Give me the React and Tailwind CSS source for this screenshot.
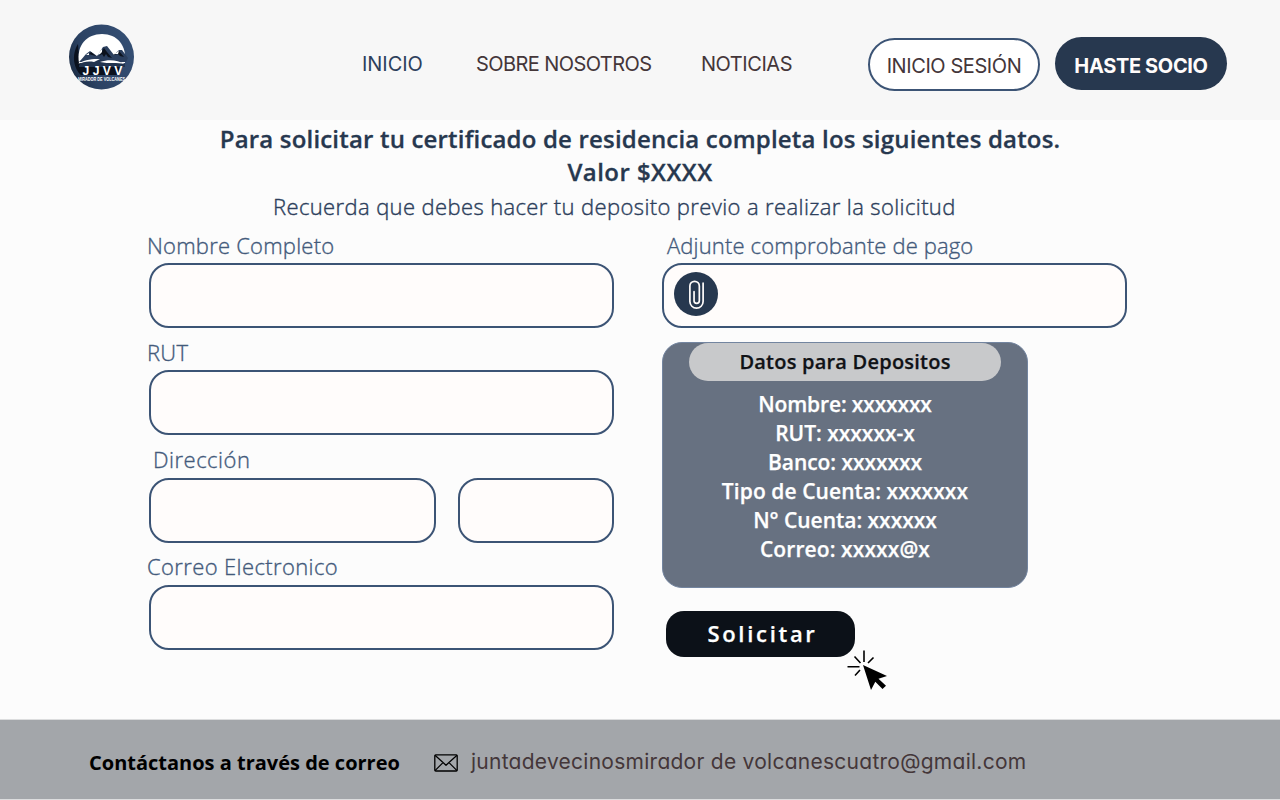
const field = "h-[65px] rounded-[20px] border-2 border-[#3c5475] bg-[#fffcfb] outline-none";
const label =
  "flex h-[35px] items-center whitespace-nowrap pb-px text-[22px] font-light text-[#435a7b] [-webkit-text-stroke:0.35px_#435a7b]";

function Logo() {
  return (
    <svg viewBox="0 0 66 66" className="size-[66px]" role="img">
      <defs>
        <linearGradient id="ring" x1="0" y1="0.7" x2="1" y2="0.3">
          <stop offset="0" stopColor="#1c2c44" />
          <stop offset="0.3" stopColor="#2b4263" />
          <stop offset="1" stopColor="#354f74" />
        </linearGradient>
      </defs>
      <circle cx="33.500" cy="33" r="32.500" fill="url(#ring)" />
      <path d="M10 20C3 31 6 45 13 51l36 0 6-12-44-4z" fill="#0a111e" />
      <path d="M11 39C8 21 19 10 34 10S59 21 57 39z" fill="#fff" />
      <path d="M11 38c3-3 5-6 7-8l4-3 7 5 6-9 4-1 7 9 5-5 3 0 6 8-2 4z" fill="#2b3f5e" />
      <path d="M31 32l5-8 3 4 5 6-4-1-2-3-2 3-2-3zM45 31l6-4 5 6-4-1-2-2zM21 30l2-2 5 4-4-1z" fill="#0c121d" />
      <path d="M29 31l5-6 0 3-2 2zM18 31l3-2 0 2zM46 30l5-3-1 3z" fill="#fff" />
      <path d="M11 41c5-5 11-6 17-6 8 2 18 0 29 5v3H11z" fill="#22344f" />
      <path d="M10 40c8-5 14-5 22-5l-6 3c-6-1-11 0-16 2zM32 38c9-3 17-2 25 2-8-2-16 0-25-2z" fill="#fff" />
      <g fill="#fff" fontFamily="'Liberation Sans', sans-serif" fontWeight="700" textAnchor="middle">
        <text x="34.500" y="51" fontSize="12.500" textLength="40" lengthAdjust="spacingAndGlyphs">J J V V</text>
        <text x="33.500" y="57.200" fontSize="5" textLength="47" lengthAdjust="spacingAndGlyphs">MIRADOR DE VOLCANES</text>
      </g>
    </svg>
  );
}

function Clip() {
  return (
    <span className="flex size-[44px] items-center justify-center rounded-full bg-[#27384f]">
      <svg viewBox="0 0 18 32" className="h-[31px] w-[17px]" fill="none" stroke="#fffcfb" strokeWidth="1.8" strokeLinecap="round">
        <path d="M16 4v19.500a7 7 0 0 1-14 0V7a5 5 0 0 1 10 0v15.500a2.800 2.800 0 0 1-5.600 0V13" />
      </svg>
    </span>
  );
}

function ClickCursor() {
  return (
    <svg viewBox="0 0 42 42" className="absolute left-[181px] top-[38px] size-[42px]">
      <path d="M17 1.500v11.500M7.500 7.500l6 6.500M26.500 8.500l-5.500 5.500M0.500 17.700h12M8 26.500l5-5.500" fill="none" stroke="#000" strokeWidth="1.600" />
      <path d="M16 16l24 11-8.500 2.700 7.500 7-3.500 3.300-7.200-7.300L24 41z" fill="#000" />
    </svg>
  );
}

function Header() {
  return (
    <header className="flex h-[120px] items-start bg-[#f7f7f7] pl-[68px] font-['Inter','Liberation_Sans',sans-serif] text-[20px] text-[#443639]">
      <div className="mt-6 w-[294px]">
        <Logo />
      </div>
      <nav className="mt-[48px] flex whitespace-nowrap leading-8">
        <a className="w-[114px] tracking-[-0.05px] text-[#2d3f5c]">INICIO</a>
        <a className="w-[225px] tracking-[-0.58px]">SOBRE NOSOTROS</a>
        <a className="w-[167px] tracking-[-0.45px]">NOTICIAS</a>
      </nav>
      <button className="mt-[38px] flex h-[53px] w-[172px] items-center justify-center whitespace-nowrap rounded-full border-2 border-[#3c5475] bg-white pt-[2px] tracking-[-0.42px]">
        INICIO SESIÓN
      </button>
      <button className="ml-[15px] mt-[37px] flex h-[53px] w-[172px] items-center justify-center whitespace-nowrap rounded-full bg-[#27384f] pt-[4px] font-bold tracking-[-0.36px] text-[#fffcfb]">
        HASTE SOCIO
      </button>
    </header>
  );
}

function DepositCard() {
  return (
    <section className="mt-[14px] flex h-[246px] w-[366px] flex-col items-center rounded-[20px] border border-[#7385a0] bg-[#677181] font-semibold">
      <h2 className="flex h-[38px] w-[312px] items-center justify-center rounded-full bg-[#c8c9cb] text-[20px] tracking-[0.22px] text-[#101216] [-webkit-text-stroke:0.25px_#101216]">
        Datos para Depositos
      </h2>
      <ul className="mt-[9px] text-center text-[21px] leading-[29px] text-white [-webkit-text-stroke:0.25px_#ffffff]">
        <li className="tracking-[-0.15px]">Nombre: xxxxxxx</li>
        <li className="tracking-[-0.02px]">RUT: xxxxxx-x</li>
        <li className="tracking-[-0.06px]">Banco: xxxxxxx</li>
        <li className="tracking-[0.08px]">Tipo de Cuenta: xxxxxxx</li>
        <li className="tracking-[-0.03px]">N° Cuenta: xxxxxx</li>
        <li className="tracking-[0.1px]">Correo: xxxxx@x</li>
      </ul>
    </section>
  );
}

export default function App() {
  return (
    <div className="flex h-[800px] w-[1280px] flex-col overflow-hidden bg-[#fcfcfc] font-['Open_Sans','Liberation_Sans',sans-serif]">
      <Header />
      <main className="h-[599px] pt-[2px]">
        <h1 className="text-center text-[24px] font-semibold leading-[33px] text-[#27384f] [-webkit-text-stroke:0.3px_#27384f]">
          <span className="tracking-[0.18px]">Para solicitar tu certificado de residencia completa los siguientes datos.</span>
          <br />
          <span className="tracking-[0.45px]">Valor $XXXX</span>
        </h1>
        <p className="h-[40px] pl-[273px] text-[22px] font-light leading-[37px] tracking-[0.38px] text-[#2d3f5c] [-webkit-text-stroke:0.4px_#2d3f5c]">
          Recuerda que debes hacer tu deposito previo a realizar la solicitud
        </p>
        <form className="flex gap-[48px] pl-[149px]">
          <div className="flex w-[465px] flex-col gap-[7.3px]">
            <div>
              <label className={label + " -ml-[2px] tracking-[0.22px]"}>Nombre Completo</label>
              <input className={field + " w-full"} />
            </div>
            <div>
              <label className={label + " -ml-[2px] tracking-[0.3px]"}>RUT</label>
              <input className={field + " w-full"} />
            </div>
            <div>
              <label className={label + " ml-[4px] tracking-[0.5px]"}>Dirección</label>
              <div className="flex justify-between">
                <input className={field + " w-[287px]"} />
                <input className={field + " w-[156px]"} />
              </div>
            </div>
            <div>
              <label className={label + " -ml-[2px] tracking-[0.38px]"}>Correo Electronico</label>
              <input className={field + " w-full"} />
            </div>
          </div>
          <div className="w-[465px]">
            <label className={label + " ml-[5px] tracking-[0.14px]"}>Adjunte comprobante de pago</label>
            <div className={field + " flex items-start pl-[10px] pt-[7px]"}>
              <Clip />
            </div>
            <DepositCard />
            <div className="relative ml-[4px] mt-[23px] w-[189px]">
              <button className="h-[46px] w-full rounded-[18px] bg-[#0c1118] pb-[2px] pl-[4px] text-[22px] font-semibold tracking-[2.7px] text-white [-webkit-text-stroke:0.25px_#ffffff]">
                Solicitar
              </button>
              <ClickCursor />
            </div>
          </div>
        </form>
      </main>
      <footer className="flex h-[81px] items-center whitespace-nowrap border-y border-[#dcddde] bg-[#a3a6aa] pb-px pl-[89px] pt-[7px] text-[20px]">
        <strong className="w-[345px] font-bold text-black">Contáctanos a través de correo</strong>
        <svg viewBox="0 0 24 18" className="h-[18px] w-6" fill="none" stroke="#000" strokeWidth="1.3" strokeLinejoin="round">
          <rect x="0.800" y="0.800" width="22.400" height="16.200" rx="1" />
          <path d="M1 1.200l11 10 11-10M1 16.600l8-8M23 16.600l-8-8" />
        </svg>
        <span className="ml-[13px] pb-px font-['Inter','Liberation_Sans',sans-serif] text-[21px] tracking-[0.26px] text-[#443639] [font-feature-settings:'cv11']">
          juntadevecinosmirador de volcanescuatro@gmail.com
        </span>
      </footer>
    </div>
  );
}
